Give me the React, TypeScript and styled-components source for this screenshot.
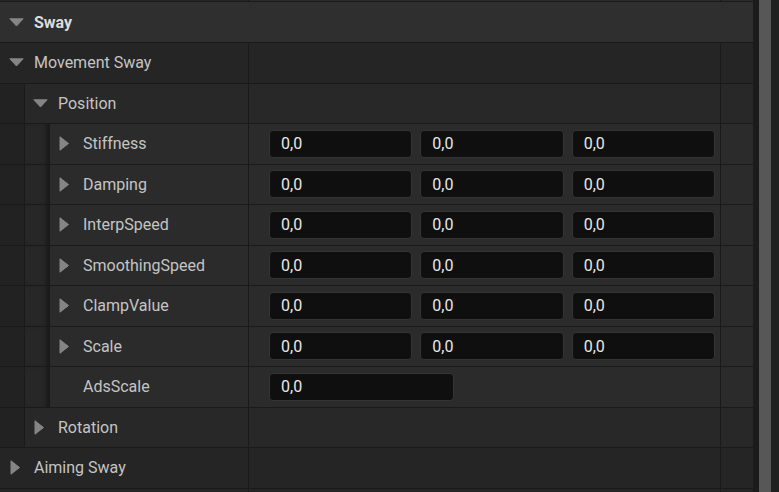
import styled, { createGlobalStyle } from 'styled-components';

const GlobalStyle = createGlobalStyle`
  html, body {
    margin: 0;
    height: 100%;
    overflow: hidden;
    background: #1c1c1c;
  }
  body {
    font-family: Roboto, "Noto Sans", sans-serif;
  }
`;

const ROW_H = 39.5;
const NAME_W = 248;
const INDENT_W = 24;

const rowTone = ['#252525', '#282828', '#2b2b2b'];
const indentTone = ['#222222', '#272727'];

const Window = styled.div`
    display: flex;
    width: 779px;
    height: 492px;
    overflow: hidden;
    background: #202020;
`;

const Panel = styled.div`
    width: 753px;
    display: flex;
    flex-direction: column;
    gap: 1px;
    background: #1a1a1a;
    overflow: hidden;
`;

const Gutter = styled.div`
    width: 6px;
    background: #1b1b1b;
`;

const ScrollThumb = styled.div`
    width: 12px;
    background: #575757;
`;

const Row = styled.div<{ $h?: number }>`
    display: flex;
    gap: 1px;
    flex-shrink: 0;
    height: ${p => p.$h ?? ROW_H}px;
`;

const CategoryHeader = styled.div`
    flex-shrink: 0;
    height: 40px;
    display: flex;
    align-items: center;
    padding-left: 9px;
    gap: 10px;
    background: #2f2f2f;
    color: #dcdcdc;
    font-size: 16px;
    font-weight: 700;
`;

const Indent = styled.div<{ $level: number }>`
    flex: 0 0 ${INDENT_W}px;
    background: ${p => indentTone[p.$level]};
    box-shadow: ${p => (p.$level > 0 ? 'inset -5px 0 5px -3px rgba(0, 0, 0, 0.45)' : 'none')};
`;

const NameCell = styled.div<{ $depth: number }>`
    flex: 0 0 ${p => NAME_W - p.$depth * (INDENT_W + 1)}px;
    display: flex;
    align-items: center;
    gap: 10px;
    padding-left: ${p => (p.$depth > 0 ? 8 : 9)}px;
    box-sizing: border-box;
    background: ${p => rowTone[p.$depth]};
    color: #c4c4c4;
    font-size: 16px;
    white-space: nowrap;
`;

const ArrowBox = styled.span`
    flex: 0 0 15px;
    height: 15px;
    display: flex;
`;

const ValueCell = styled.div<{ $depth: number }>`
    flex: 0 0 471px;
    display: flex;
    align-items: center;
    gap: 8px;
    padding: 0 5px 0 20px;
    box-sizing: border-box;
    background: ${p => rowTone[p.$depth]};
`;

const ExtraCell = styled.div<{ $depth: number }>`
    flex: 1;
    background: ${p => rowTone[p.$depth]};
`;

const NumberBox = styled.div<{ $w?: number }>`
    ${p => (p.$w ? `flex: 0 0 ${p.$w}px;` : 'flex: 1;')}
    height: 28px;
    box-sizing: border-box;
    display: flex;
    align-items: center;
    padding-left: 11px;
    background: #0f0f0f;
    border: 1px solid #343434;
    border-radius: 4px;
    color: #e8e8e8;
    font-size: 16px;
`;

type Arrow = 'down' | 'right' | 'none';

function Chevron({ dir }: { dir: Arrow }) {
    if (dir === 'none') return <ArrowBox />;
    const pts = dir === 'down' ? '0.8,3.8 14.2,3.8 7.5,11' : '2,0.8 10.5,7.5 2,14.2';
    return (
        <ArrowBox>
            <svg width="15" height="15" viewBox="0 0 15 15">
                <polygon points={pts} fill="#858585" stroke="#858585" strokeWidth="1" strokeLinejoin="round" />
            </svg>
        </ArrowBox>
    );
}

type Prop = {
    label: string;
    depth: number;
    arrow: Arrow;
    fields?: number;
    single?: boolean;
};

const props: Prop[] = [
    { label: 'Movement Sway', depth: 0, arrow: 'down' },
    { label: 'Position', depth: 1, arrow: 'down' },
    { label: 'Stiffness', depth: 2, arrow: 'right', fields: 3 },
    { label: 'Damping', depth: 2, arrow: 'right', fields: 3 },
    { label: 'InterpSpeed', depth: 2, arrow: 'right', fields: 3 },
    { label: 'SmoothingSpeed', depth: 2, arrow: 'right', fields: 3 },
    { label: 'ClampValue', depth: 2, arrow: 'right', fields: 3 },
    { label: 'Scale', depth: 2, arrow: 'right', fields: 3 },
    { label: 'AdsScale', depth: 2, arrow: 'none', fields: 1, single: true },
    { label: 'Rotation', depth: 1, arrow: 'right' },
    { label: 'Aiming Sway', depth: 0, arrow: 'right' },
    { label: '', depth: 0, arrow: 'none' },
];

function PropertyRow({ p }: { p: Prop }) {
    const indents = Array.from({ length: p.depth }, (_, i) => i);
    const fields = Array.from({ length: p.fields ?? 0 }, (_, i) => i);
    return (
        <Row>
            {indents.map(i => (
                <Indent key={i} $level={i} />
            ))}
            <NameCell $depth={p.depth}>
                {p.label && <Chevron dir={p.arrow} />}
                {p.label}
            </NameCell>
            <ValueCell $depth={p.depth}>
                {fields.map(i => (
                    <NumberBox key={i} $w={p.single ? 185 : undefined}>
                        0,0
                    </NumberBox>
                ))}
            </ValueCell>
            <ExtraCell $depth={p.depth} />
        </Row>
    );
}

export default function App() {
    return (
        <>
            <GlobalStyle />
            <Window>
                <Panel>
                    <Row $h={1}>
                        <NameCell $depth={0} />
                        <ValueCell $depth={2} />
                        <ExtraCell $depth={2} />
                    </Row>
                    <CategoryHeader>
                        <Chevron dir="down" />
                        Sway
                    </CategoryHeader>
                    {props.map((p, i) => (
                        <PropertyRow key={i} p={p} />
                    ))}
                </Panel>
                <Gutter />
                <ScrollThumb />
            </Window>
        </>
    );
}
